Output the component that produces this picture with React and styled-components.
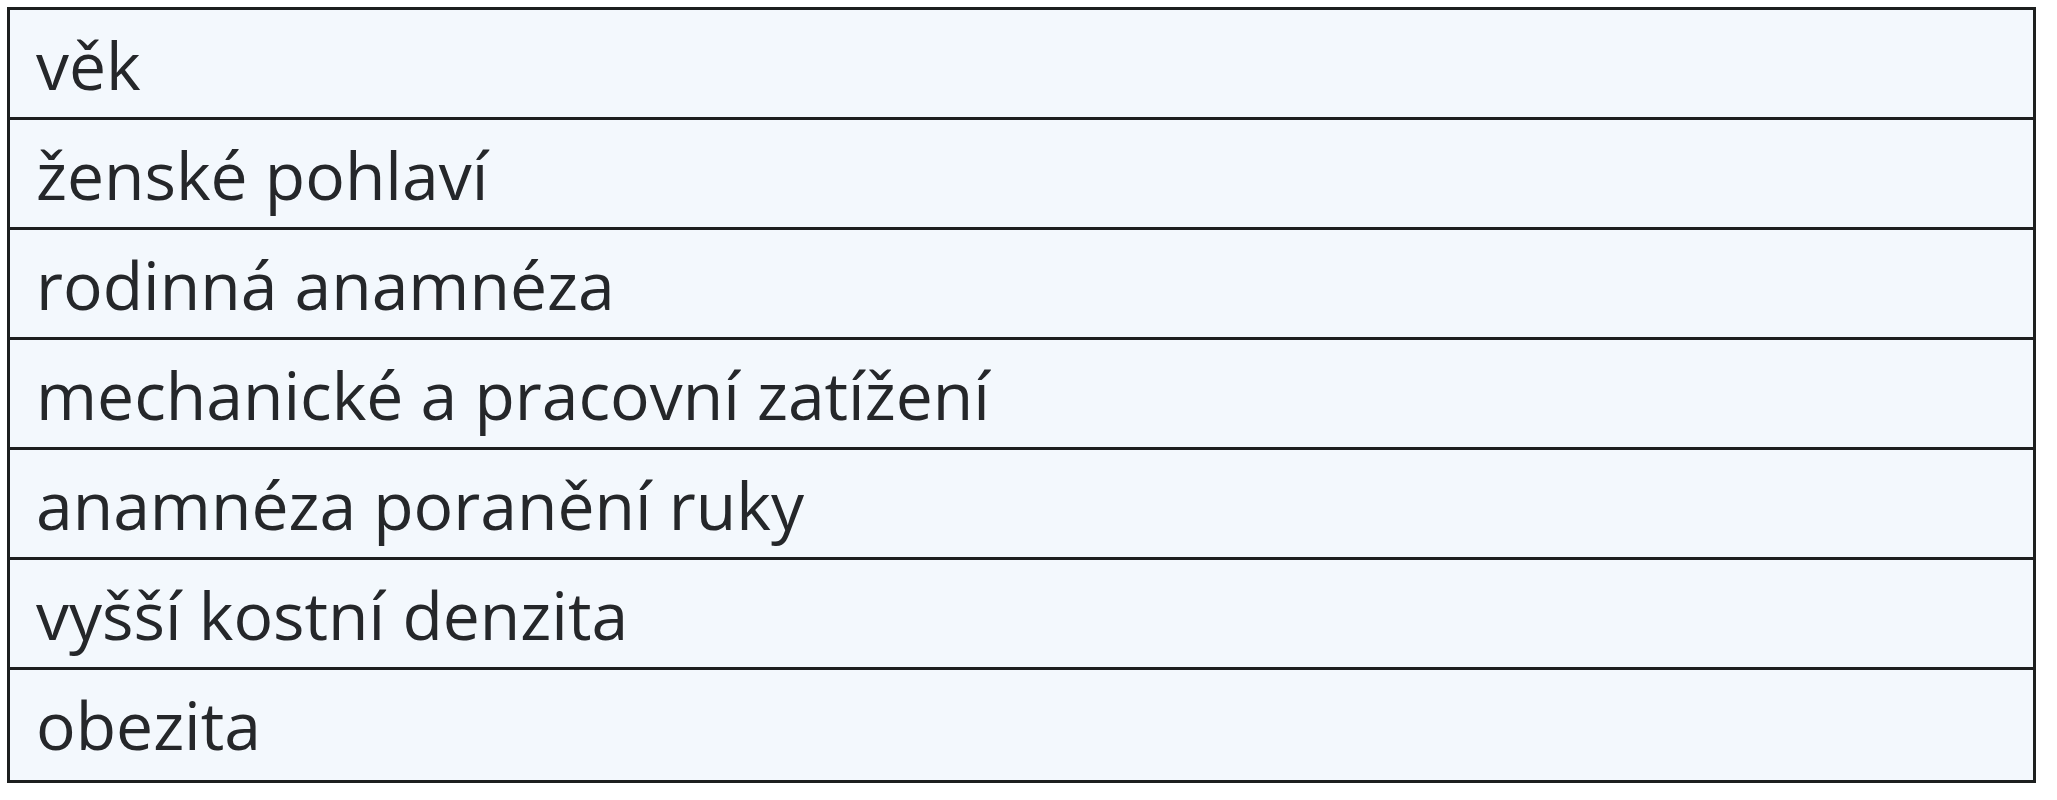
import React from "react";
import styled, { createGlobalStyle } from "styled-components";

const GlobalStyle = createGlobalStyle`
  html, body { margin: 0; padding: 0; background: #ffffff; }
  body { font-family: "Open Sans", "Noto Sans", sans-serif; }
`;

const Page = styled.div`
  padding: 7px;
`;

const Table = styled.div`
  width: 2029px;
  box-sizing: border-box;
  border: 3px solid #1d1f1f;
  background: #f3f8fd;
  display: flex;
  flex-direction: column;
`;

const Row = styled.div`
  box-sizing: content-box;
  border-top: ${p => (p.$first ? "none" : "3px solid #1d1f1f")};
  padding: 2px 0 ${p => (p.$last ? "3px" : "0")} 26px;
  height: 105px;
  font-family: "Open Sans", "Noto Sans", sans-serif;
  font-size: 66px;
  font-weight: 400;
  line-height: 105px;
  color: #25272a;
  white-space: nowrap;
`;

const items = [
  "věk",
  "ženské pohlaví",
  "rodinná anamnéza",
  "mechanické a pracovní zatížení",
  "anamnéza poranění ruky",
  "vyšší kostní denzita",
  "obezita",
];

export default function App() {
  return (
    <Page>
      <GlobalStyle />
      <Table>
        {items.map((t, i) => (
          <Row key={t} $first={i === 0} $last={i === items.length - 1}>
            {t}
          </Row>
        ))}
      </Table>
    </Page>
  );
}
